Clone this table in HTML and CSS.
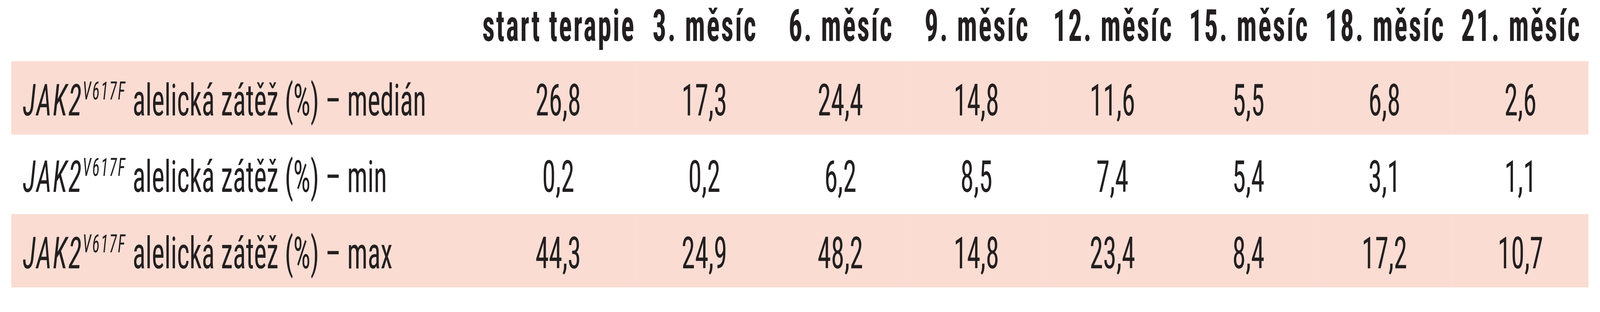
FILE: index.html
```html
<!DOCTYPE html>
<html lang="cs">
<head>
<meta charset="utf-8">
<link rel="stylesheet" href="styles.css">
</head>
<body>
<div class="sheet">
  <table class="data">
    <colgroup>
      <col class="c-label">
      <col class="c-start">
      <col class="c-month"><col class="c-month"><col class="c-month"><col class="c-month"><col class="c-month"><col class="c-month"><col class="c-month">
    </colgroup>
    <thead>
      <tr class="head">
        <th></th>
        <th>start terapie</th>
        <th>3. měsíc</th>
        <th>6. měsíc</th>
        <th>9. měsíc</th>
        <th>12. měsíc</th>
        <th>15. měsíc</th>
        <th>18. měsíc</th>
        <th>21. měsíc</th>
      </tr>
    </thead>
    <tbody>
      <tr class="shaded">
        <td class="label"><i>JAK2</i><sup>V617F</sup> alelická zátěž (%) – medián</td>
        <td>26,8</td><td>17,3</td><td>24,4</td><td>14,8</td><td>11,6</td><td>5,5</td><td>6,8</td><td>2,6</td>
      </tr>
      <tr>
        <td class="label"><i>JAK2</i><sup>V617F</sup> alelická zátěž (%) – min</td>
        <td>0,2</td><td>0,2</td><td>6,2</td><td>8,5</td><td>7,4</td><td>5,4</td><td>3,1</td><td>1,1</td>
      </tr>
      <tr class="shaded">
        <td class="label"><i>JAK2</i><sup>V617F</sup> alelická zátěž (%) – max</td>
        <td>44,3</td><td>24,9</td><td>48,2</td><td>14,8</td><td>23,4</td><td>8,4</td><td>17,2</td><td>10,7</td>
      </tr>
    </tbody>
  </table>
</div>
</body>
</html>
```
FILE: styles.css
```css
html, body {
  margin: 0;
  overflow: hidden;
  background: #ffffff;
}

body {
  color: #231f20;
  font-family: "Roboto Condensed", "Roboto", "Open Sans", sans-serif;
  font-stretch: 75%;
  font-size: 113px;
}

.sheet {
  width: 6659px;
  transform: scaleX(0.615107);
  transform-origin: 0 0;
}

.data {
  border-collapse: separate;
  border-spacing: 0 8px;
  table-layout: fixed;
  width: 6564px;
  margin-left: 47px;
}

.c-label { width: 1951px; }
.c-start { width: 650px; }
.c-month { width: 566px; }

.head { height: 141px; }

.head th {
  padding: 0 0 0 6px;
  vertical-align: top;
  line-height: 117px;
  font-weight: 700;
  letter-spacing: 6.3px;
  text-align: center;
  white-space: nowrap;
}

tbody tr { height: 188px; }

tbody td {
  padding: 26px 0 0 0;
  vertical-align: top;
  line-height: 150px;
  text-align: center;
  white-space: nowrap;
}

tbody td.label {
  text-align: left;
  padding-left: 48px;
}

.shaded td { background: #fadcd2; }

.label i {
  font-style: italic;
  letter-spacing: 5px;
}

.label sup {
  font-size: 64px;
  font-style: italic;
  line-height: 0;
  letter-spacing: 5px;
  vertical-align: 41px;
}
```
